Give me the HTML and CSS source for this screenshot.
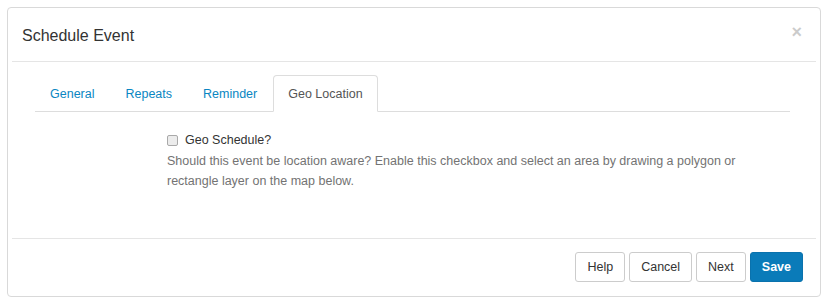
FILE: index.html
```
<!DOCTYPE html>
<html lang="en">
<head>
    <meta charset="UTF-8">
    <title>Schedule Event</title>
    <link rel="stylesheet" href="styles.css">
</head>
<body>
    <div class="page">
        <div class="modal">
            <div class="modal-header">
                <h4 class="modal-title">Schedule Event</h4>
                <button class="close" type="button">&times;</button>
            </div>

            <div class="modal-body">
                <ul class="nav-tabs">
                    <li><a href="#">General</a></li>
                    <li><a href="#">Repeats</a></li>
                    <li><a href="#">Reminder</a></li>
                    <li class="active"><a href="#">Geo Location</a></li>
                </ul>

                <div class="tab-pane">
                    <label class="checkbox">
                        <input type="checkbox">
                        <span>Geo Schedule?</span>
                    </label>
                    <p class="help-block">Should this event be location aware? Enable this checkbox and select an area by drawing a polygon or rectangle layer on the map below.</p>
                </div>
            </div>

            <div class="modal-footer">
                <button class="btn">Help</button>
                <button class="btn">Cancel</button>
                <button class="btn">Next</button>
                <button class="btn btn-primary">Save</button>
            </div>
        </div>
    </div>
</body>
</html>
```
FILE: styles.css
```
* {
    margin: 0;
    padding: 0;
    box-sizing: border-box;
}

body {
    font-family: "Liberation Sans", Arial, sans-serif;
    font-size: 12.5px;
    line-height: 20px;
    color: #333;
    background: #fff;
}

.page {
    padding: 7px 8px 7px 7px;
}

.modal {
    width: 814px;
    height: 290px;
    border: 1px solid #d9d9d9;
    border-radius: 4px;
    padding: 0 4px;
    display: flex;
    flex-direction: column;
}

.modal-header {
    display: flex;
    align-items: center;
    justify-content: space-between;
    height: 54px;
    padding: 0 10px;
    border-bottom: 1px solid #e5e5e5;
}

.modal-title {
    font-size: 16px;
    font-weight: normal;
    color: #333;
    line-height: 23px;
    margin-top: 1px;
}

.close {
    background: none;
    border: none;
    font-family: "Liberation Sans", Arial, sans-serif;
    font-size: 18px;
    font-weight: bold;
    color: #000;
    opacity: 0.2;
    line-height: 1;
    margin-right: 4px;
    margin-top: -6px;
}

.modal-body {
    height: 176px;
    padding: 13px 26px 0 23px;
}

.nav-tabs {
    list-style: none;
    display: flex;
    border-bottom: 1px solid #ddd;
}

.nav-tabs li {
    margin-right: 1px;
    margin-bottom: -1px;
}

.nav-tabs a {
    display: block;
    padding: 8px 14px 7px;
    border: 1px solid transparent;
    border-radius: 4px 4px 0 0;
    color: #0a86c2;
    text-decoration: none;
}

.nav-tabs .active a {
    color: #555;
    background: #fff;
    border-color: #ddd #ddd transparent;
}

.tab-pane {
    margin-left: 132px;
    padding-top: 18px;
}

.checkbox {
    display: flex;
    align-items: center;
    gap: 7px;
    color: #333;
}

.checkbox input {
    appearance: none;
    width: 11px;
    height: 11px;
    border: 1px solid #a9a9a9;
    border-radius: 2px;
    background: #ececec;
}

.help-block {
    margin-top: 1px;
    color: #737373;
    max-width: 590px;
}

.modal-footer {
    display: flex;
    justify-content: flex-end;
    gap: 4px;
    padding: 13px 13px 0;
    border-top: 1px solid #e5e5e5;
}

.btn {
    font-family: "Liberation Sans", Arial, sans-serif;
    font-size: 12.5px;
    line-height: 20px;
    padding: 4px 11px;
    color: #333;
    background: #fff;
    border: 1px solid #ccc;
    border-radius: 3px;
}

.btn-primary {
    color: #fff;
    font-weight: bold;
    background: #0a7bb9;
    border-color: #0a72ad;
}
```
